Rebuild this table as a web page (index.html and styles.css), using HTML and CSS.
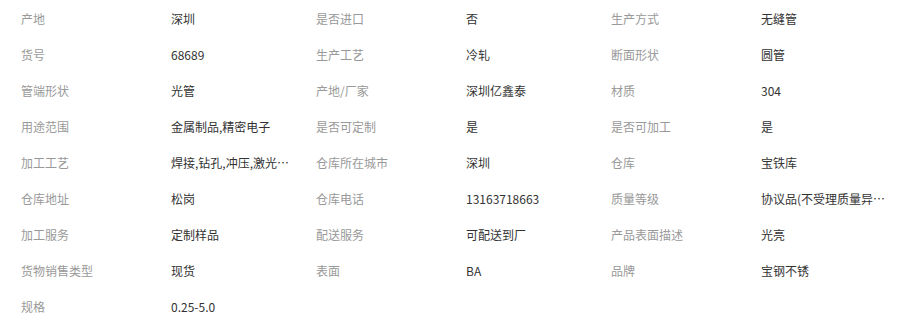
FILE: index.html
```html
<!DOCTYPE html>
<html lang="zh-CN">
<head>
<meta charset="utf-8">
<link rel="stylesheet" href="styles.css">
</head>
<body>
<div class="attrs">
  <div class="item"><span class="label">产地</span><span class="value">深圳</span></div>
  <div class="item"><span class="label">是否进口</span><span class="value">否</span></div>
  <div class="item"><span class="label">生产方式</span><span class="value">无缝管</span></div>
  <div class="item"><span class="label">货号</span><span class="value">68689</span></div>
  <div class="item"><span class="label">生产工艺</span><span class="value">冷轧</span></div>
  <div class="item"><span class="label">断面形状</span><span class="value">圆管</span></div>
  <div class="item"><span class="label">管端形状</span><span class="value">光管</span></div>
  <div class="item"><span class="label">产地/厂家</span><span class="value">深圳亿鑫泰</span></div>
  <div class="item"><span class="label">材质</span><span class="value">304</span></div>
  <div class="item"><span class="label">用途范围</span><span class="value">金属制品,精密电子</span></div>
  <div class="item"><span class="label">是否可定制</span><span class="value">是</span></div>
  <div class="item"><span class="label">是否可加工</span><span class="value">是</span></div>
  <div class="item"><span class="label">加工工艺</span><span class="value">焊接,钻孔,冲压,激光切割,折弯</span></div>
  <div class="item"><span class="label">仓库所在城市</span><span class="value">深圳</span></div>
  <div class="item"><span class="label">仓库</span><span class="value">宝铁库</span></div>
  <div class="item"><span class="label">仓库地址</span><span class="value">松岗</span></div>
  <div class="item"><span class="label">仓库电话</span><span class="value">13163718663</span></div>
  <div class="item"><span class="label">质量等级</span><span class="value">协议品(不受理质量异议)</span></div>
  <div class="item"><span class="label">加工服务</span><span class="value">定制样品</span></div>
  <div class="item"><span class="label">配送服务</span><span class="value">可配送到厂</span></div>
  <div class="item"><span class="label">产品表面描述</span><span class="value">光亮</span></div>
  <div class="item"><span class="label">货物销售类型</span><span class="value">现货</span></div>
  <div class="item"><span class="label">表面</span><span class="value">BA</span></div>
  <div class="item"><span class="label">品牌</span><span class="value">宝钢不锈</span></div>
  <div class="item"><span class="label">规格</span><span class="value">0.25-5.0</span></div>
</div>
</body>
</html>
```
FILE: styles.css
```css
html, body {
  margin: 0;
  padding: 0;
  background: #fff;
}
body {
  font-family: "Microsoft YaHei", "Noto Sans CJK SC", "Liberation Sans", sans-serif;
  font-size: 12px;
}
.attrs {
  display: grid;
  grid-template-columns: repeat(3, 295px);
  padding-left: 21px;
}
.item {
  display: flex;
  align-items: center;
  height: 36px;
}
.label {
  width: 150px;
  flex: none;
  color: #999;
}
.value {
  width: 128px;
  color: #333;
  white-space: nowrap;
  overflow: hidden;
  text-overflow: ellipsis;
}
```
